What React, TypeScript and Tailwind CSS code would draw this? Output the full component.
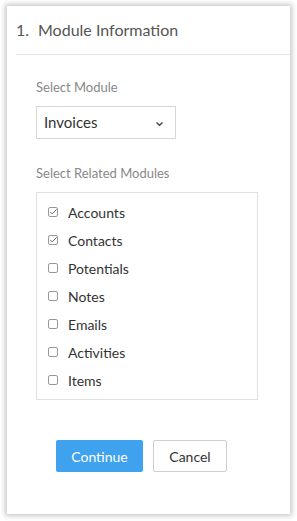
import React from "react";

const items = [
  { label: "Accounts", checked: true },
  { label: "Contacts", checked: true },
  { label: "Potentials", checked: false },
  { label: "Notes", checked: false },
  { label: "Emails", checked: false },
  { label: "Activities", checked: false },
  { label: "Items", checked: false },
];

function Box({ checked }: { checked: boolean }) {
  return (
    <svg width="10" height="10" viewBox="0 0 10 10" className="shrink-0">
      <rect x="0.5" y="0.5" width="9" height="9" rx="1.5" fill="white" stroke="#999" strokeWidth="1" />
      {checked && <path d="M2.3 5 L4.2 6.9 L8.6 2.4" fill="none" stroke="#666" strokeWidth="1" />}
    </svg>
  );
}

export default function App() {
  return (
    <div className="w-[297px] h-[521px] bg-white pt-[6px] pl-[7px]" style={{ fontFamily: "Lato, 'Open Sans', sans-serif" }}>
      <div className="w-[283px] h-[508px] bg-white shadow-[0_0_5px_2px_rgba(0,0,0,0.22)] flex flex-col">
        <div className="ml-[9px] border-b border-[#e6e6e6] h-[49px] flex items-center text-[16px] text-[#555]">
          <span className="w-[22px]">1.</span>
          <span>Module Information</span>
        </div>
        <div className="pl-[29px] pt-[24px] flex flex-col">
          <div className="text-[13px] text-[#888] h-[17px] leading-[17px]">Select Module</div>
          <div className="mt-[10px] w-[140px] h-[33px] border border-[#d6d6d6] flex items-center justify-between px-[7px] text-[15px] text-[#333]">
            <span>Invoices</span>
            <svg width="9" height="6" viewBox="0 0 9 6" className="mr-[4px] mt-[2px]">
              <path d="M1.5 1.5 L4.5 4.3 L7.5 1.5" fill="none" stroke="#444" strokeWidth="1.4" />
            </svg>
          </div>
          <div className="mt-[26px] text-[13px] text-[#888] h-[17px] leading-[17px]">Select Related Modules</div>
          <div className="mt-[10px] w-[222px] h-[208px] border border-[#e0e0e0] pt-[5px] pl-[11px] flex flex-col">
            {items.map((it) => (
              <div key={it.label} className="h-[28px] flex items-center gap-[10px] text-[14px] text-[#333]">
                <Box checked={it.checked} />
                <span>{it.label}</span>
              </div>
            ))}
          </div>
          <div className="mt-[40px] ml-[20px] flex gap-[10px]">
            <button className="w-[87px] h-[32px] rounded-[2px] bg-[#3fa2ee] text-white text-[14px]">Continue</button>
            <button className="w-[74px] h-[32px] rounded-[2px] border border-[#cfcfcf] bg-white text-[#333] text-[14px]">Cancel</button>
          </div>
        </div>
      </div>
    </div>
  );
}
